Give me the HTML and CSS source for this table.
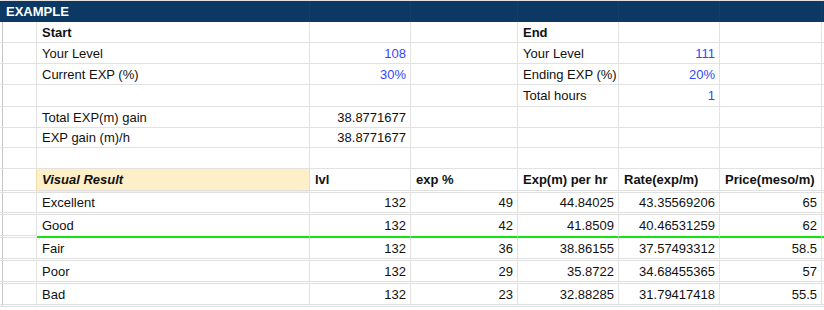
FILE: index.html
```html
<!DOCTYPE html>
<html>
<head>
<meta charset="utf-8">
<link rel="stylesheet" href="styles.css">
</head>
<body>
<div class="sheet">
  <div class="row title">
    <div class="c c0 span">EXAMPLE</div>
    <div class="c"></div><div class="c"></div><div class="c"></div><div class="c"></div><div class="c"></div><div class="c"></div><div class="c last"></div>
  </div>
  <div class="row h21">
    <div class="c c0"></div><div class="c b">Start</div><div class="c"></div><div class="c"></div><div class="c b">End</div><div class="c"></div><div class="c"></div><div class="c last"></div>
  </div>
  <div class="row h21">
    <div class="c c0"></div><div class="c">Your Level</div><div class="c r blue">108</div><div class="c"></div><div class="c">Your Level</div><div class="c r blue">111</div><div class="c"></div><div class="c last"></div>
  </div>
  <div class="row h21">
    <div class="c c0"></div><div class="c">Current EXP (%)</div><div class="c r blue">30%</div><div class="c"></div><div class="c">Ending EXP (%)</div><div class="c r blue">20%</div><div class="c"></div><div class="c last"></div>
  </div>
  <div class="row h22">
    <div class="c c0"></div><div class="c"></div><div class="c"></div><div class="c"></div><div class="c">Total hours</div><div class="c r blue">1</div><div class="c"></div><div class="c last"></div>
  </div>
  <div class="row h21">
    <div class="c c0"></div><div class="c">Total EXP(m) gain</div><div class="c r">38.8771677</div><div class="c"></div><div class="c"></div><div class="c"></div><div class="c"></div><div class="c last"></div>
  </div>
  <div class="row h20">
    <div class="c c0"></div><div class="c">EXP gain (m)/h</div><div class="c r">38.8771677</div><div class="c"></div><div class="c"></div><div class="c"></div><div class="c"></div><div class="c last"></div>
  </div>
  <div class="row h21">
    <div class="c c0"></div><div class="c"></div><div class="c"></div><div class="c"></div><div class="c"></div><div class="c"></div><div class="c"></div><div class="c last"></div>
  </div>
  <div class="row dbl h24">
    <div class="c c0"></div><div class="c b i hl">Visual Result</div><div class="c b">lvl</div><div class="c b">exp %</div><div class="c b">Exp(m) per hr</div><div class="c b">Rate(exp/m)</div><div class="c b">Price(meso/m)</div><div class="c last"></div>
  </div>
  <div class="row dbl h22">
    <div class="c c0"></div><div class="c">Excellent</div><div class="c r">132</div><div class="c r">49</div><div class="c r">44.84025</div><div class="c r">43.35569206</div><div class="c r">65</div><div class="c last"></div>
  </div>
  <div class="row green h23">
    <div class="c c0"></div><div class="c">Good</div><div class="c r">132</div><div class="c r">42</div><div class="c r">41.8509</div><div class="c r">40.46531259</div><div class="c r">62</div><div class="c last"></div>
  </div>
  <div class="row dbl h23">
    <div class="c c0"></div><div class="c">Fair</div><div class="c r">132</div><div class="c r">36</div><div class="c r">38.86155</div><div class="c r">37.57493312</div><div class="c r">58.5</div><div class="c last"></div>
  </div>
  <div class="row dbl h23">
    <div class="c c0"></div><div class="c">Poor</div><div class="c r">132</div><div class="c r">29</div><div class="c r">35.8722</div><div class="c r">34.68455365</div><div class="c r">57</div><div class="c last"></div>
  </div>
  <div class="row dbl h23">
    <div class="c c0"></div><div class="c">Bad</div><div class="c r">132</div><div class="c r">23</div><div class="c r">32.88285</div><div class="c r">31.79417418</div><div class="c r">55.5</div><div class="c last"></div>
  </div>
</div>
</body>
</html>
```
FILE: styles.css
```css
html, body {
  margin: 0;
  padding: 0;
  background: #ffffff;
}
body {
  height: 310px;
  overflow: hidden;
}
.sheet {
  font-family: "Liberation Sans", Arial, sans-serif;
  font-size: 13px;
  color: #111;
  width: 824px;
  overflow: hidden;
}
.row {
  display: grid;
  grid-template-columns: 37px 273px 101px 107px 101px 101px 102px 1fr;
}
.c {
  box-sizing: border-box;
  border-right: 1px solid #e2e2e2;
  border-bottom: 1px solid #e2e2e2;
  padding: 0 4px 0 5px;
  display: flex;
  align-items: center;
  white-space: nowrap;
  overflow: visible;
}
.c0 {
  background-image: linear-gradient(to right, transparent 2px, #c6c6c6 2px, #c6c6c6 3px, transparent 3px);
}
.last { border-right: none; }
.h20 { height: 20px; }
.h21 { height: 21px; }
.h22 { height: 22px; }
.h23 { height: 23px; }
.h24 { height: 24px; }
.title {
  height: 22px;
  border-top: 1px solid #e2e2e2;
  box-sizing: border-box;
}
.title .c {
  background: #0b3963;
  border-right: 1px solid #123f69;
  border-bottom: none;
}
.title .c0 {
  background: #0b3963;
  color: #fff;
  font-weight: bold;
  padding-left: 6px;
  position: relative;
  z-index: 1;
  border-right-color: #0b3963;
}
.title .last {
  margin-right: 3px;
  border-right: 1px solid #d0d0d0;
}
.r { justify-content: flex-end; }
.b { font-weight: bold; }
.i { font-style: italic; }
.blue { color: #3347ff; }
.hl {
  background: #fdf0c8;
  border-left: 1px solid #f1dfa8;
  border-right-color: #f1dfa8;
  margin-left: -1px;
}
.dbl .c {
  border-bottom: 3px double #e0e0e0;
}
.green .c {
  border-bottom: 2px solid #12e312;
}
.green .c0 {
  border-bottom: 3px double #e0e0e0;
}
```
